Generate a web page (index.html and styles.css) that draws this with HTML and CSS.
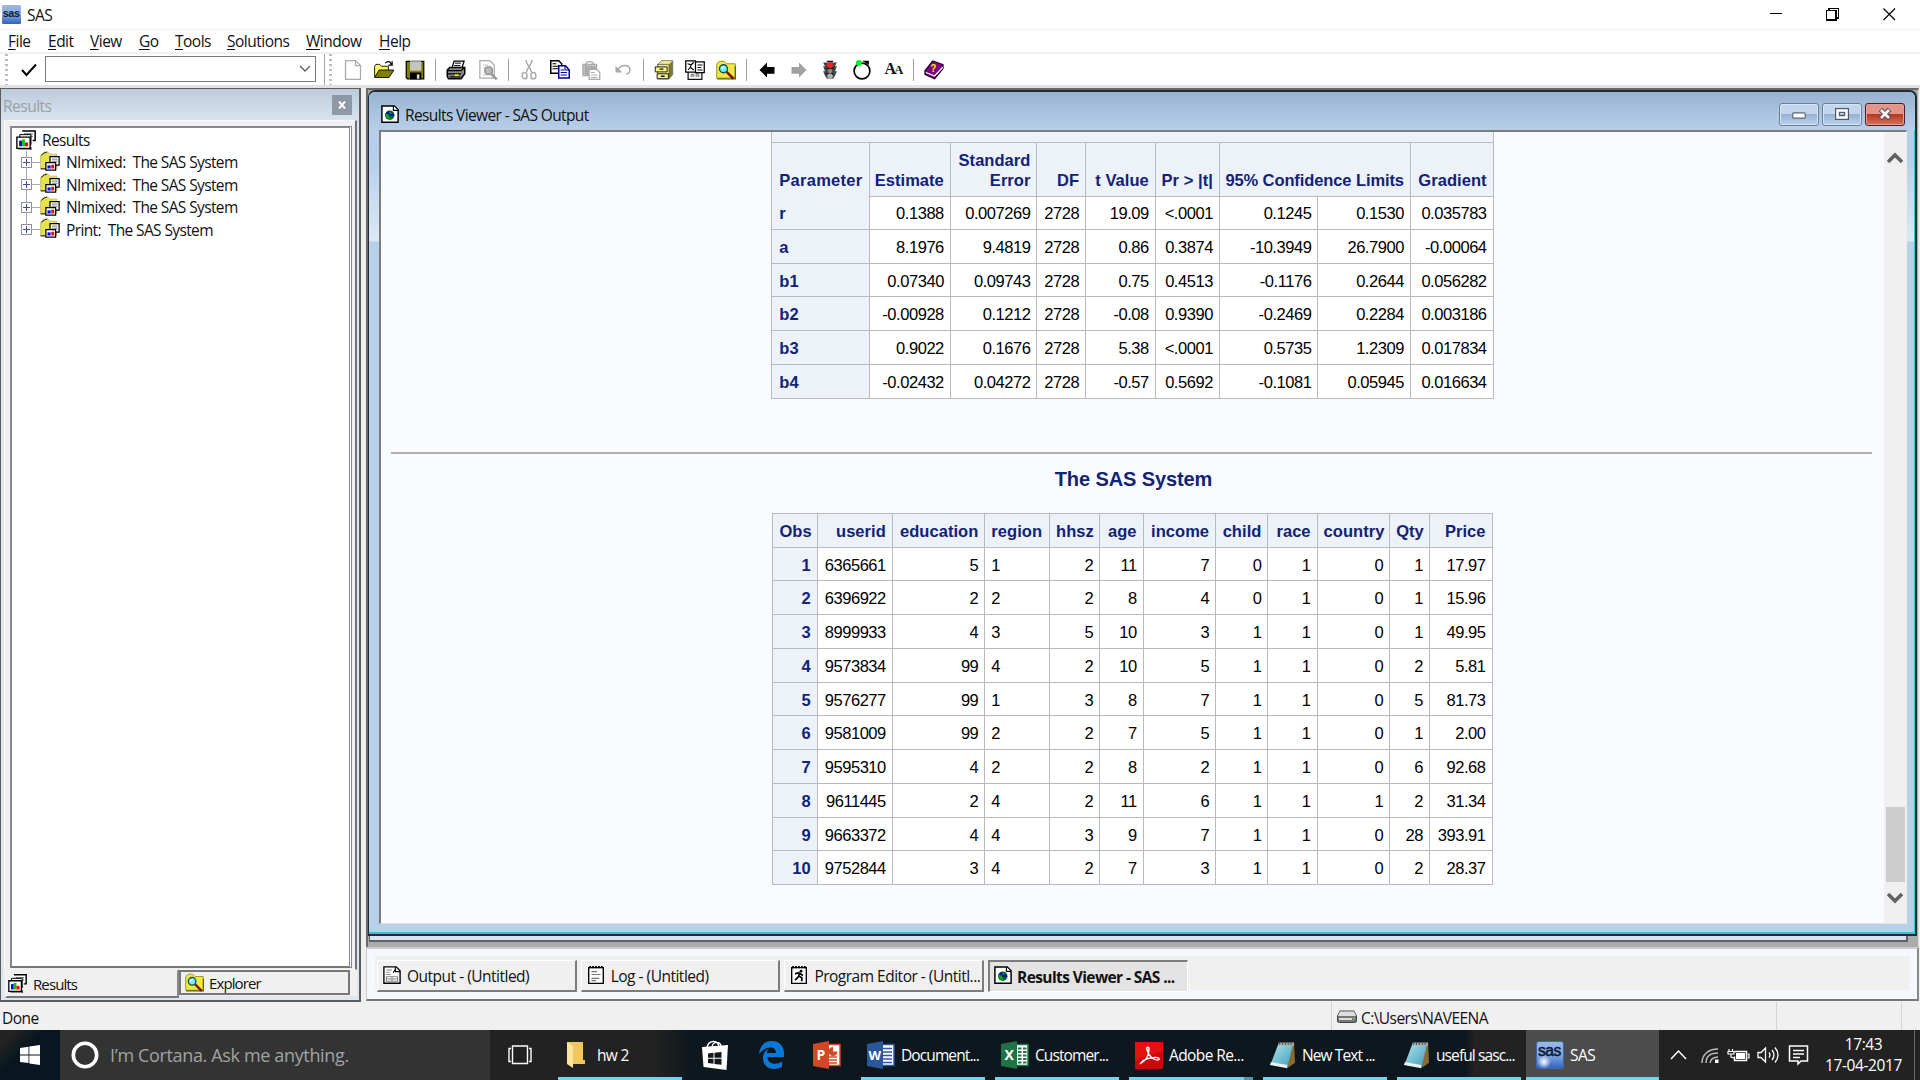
FILE: index.html
```html
<!DOCTYPE html>
<html lang="en">
<head>
<meta charset="utf-8">
<title>SAS</title>
<link rel="stylesheet" href="styles.css">
</head>
<body>
<svg class="defs" width="0" height="0">
  <defs>
    <linearGradient id="gSas" x1="0" y1="0" x2="0" y2="1"><stop offset="0" stop-color="#9db8e0"/><stop offset=".5" stop-color="#86a8e2"/><stop offset="1" stop-color="#2c62bd"/></linearGradient>
    <linearGradient id="gNote" x1="0" y1="0" x2="1" y2="1"><stop offset="0" stop-color="#b4e4ee"/><stop offset="1" stop-color="#3a9db8"/></linearGradient>
    <radialGradient id="gGlow"><stop offset="0" stop-color="#fff"/><stop offset="1" stop-color="#fff" stop-opacity="0"/></radialGradient>
    <symbol id="i-results" viewBox="0 0 16 16">
      <path d="M5 .7h10.300v7.600h-2" fill="#fff" stroke="#000" stroke-width="1.200"/><path d="M6.500 3h7M6.500 5h7" stroke="#777"/>
      <path d="M3 3.700h9v8H3z" fill="#fff" stroke="#000" stroke-width=".8"/><path d="M.7 5.700h10.600v9H.7z" fill="#fff" stroke="#000" stroke-width="1.100"/>
      <path d="M2.500 8.500h2.300V13H2.500z" fill="#00f"/><path d="M4.800 7.500h2.300V13H4.800z" fill="#0c0"/><path d="M7.100 10h2.600v3H7.100z" fill="#f00"/><path d="M12 13.500V16H2" fill="none" stroke="#000" stroke-width=".7"/>
    </symbol>
    <symbol id="i-rfolder" viewBox="0 0 16 16">
      <path d="M.5 3.500L3 1l3-.5 2 2h5.500V14H.5z" fill="#e6e34a" stroke="#b5b070" stroke-width=".6"/><path d="M.5 14.300h5" stroke="#333"/><path d="M1 3.500l2.500-2L5.500 1" fill="none" stroke="#222" stroke-width=".8"/>
      <path d="M8 4.500h7.300v6.800H8z" fill="#fff" stroke="#000"/><path d="M9.500 6.500h4.500M9.500 8.200h4.500" stroke="#777" stroke-width=".8"/>
      <path d="M4.700 9.200h7.800v6H4.700z" fill="#fff" stroke="#000"/><path d="M6 11.500h2.500v2.500H6z" fill="#00f"/><path d="M9 11h2.300v3H9z" fill="#f00"/>
    </symbol>
    <symbol id="i-globe" viewBox="0 0 16 16">
      <path d="M.8.8h11l3.400 3.500v11H.8z" fill="#fff" stroke="#000" stroke-width="1.300"/><path d="M11 .8v4h4.200" fill="#fff" stroke="#000"/>
      <circle cx="7.800" cy="9" r="4.200" fill="#063"/><path d="M8 5l4 4-4 1 1 3-4-1-1-4 2-2z" fill="#00b"/><path d="M4 7.500l3 1 1 2.500 1 2-3-.5-2-2.500zM8 5l2 3-3-.5z" fill="#0a0"/>
    </symbol>
    <symbol id="i-new" viewBox="0 0 16 16"><path d="M2 .5h8l4 4v11H2zM10 .5v4h4" fill="#fff" stroke="#aaa"/></symbol>
    <symbol id="i-open" viewBox="0 0 16 16"><path d="M.5 13.500V5l1-1.500h3L6 5h5.500v3" fill="#ff5" stroke="#000" stroke-width=".7"/><path d="M.5 14L4 8h12l-4 6z" fill="#808000" stroke="#000" stroke-width=".7"/><path d="M9 2.500c2-2 4-1.500 5 1M14.500 1v3h-3" fill="none" stroke="#000"/></symbol>
    <symbol id="i-save" viewBox="0 0 16 16"><path d="M1 1h14v14H2l-1-1z" fill="#808000" stroke="#000"/><path d="M4 1h9v7.500H4z" fill="#c4c4c4"/><path d="M4 10h9v5.500H4z" fill="#000"/><path d="M9.500 11.500h2V15h-2z" fill="#ddd"/></symbol>
    <symbol id="i-print" viewBox="0 0 16 16"><path d="M4.500 7L6.500.8h8L12.500 7z" fill="#fff" stroke="#000"/><path d="M7 2.500h5M6.500 4.500h5" stroke="#000" stroke-width=".8"/><path d="M1 8l2-2h12v5l-3 4H2l-1-2z" fill="#888" stroke="#000" stroke-width="1.200"/><path d="M1 8.500h11l3-2.500M1.500 11h10.500M3 13.500h8.500" stroke="#000" fill="none"/><path d="M7 12.200h3" stroke="#ee0" stroke-width="1.500"/></symbol>
    <symbol id="i-preview" viewBox="0 0 16 16"><path d="M1.500 14.500V.5h8L13 4v10.500z" fill="#fff" stroke="#aaa"/><path d="M4 4h4M4 6h2M4 12h3" stroke="#ccc"/><circle cx="8.500" cy="8.500" r="3" fill="#bbb" stroke="#999" stroke-width="1.500"/><path d="M10.500 11l4.500 4.500" stroke="#999" stroke-width="2"/></symbol>
    <symbol id="i-cut" viewBox="0 0 16 16"><g fill="none" stroke="#aaa" stroke-width="1.200"><path d="M5.500 0c0 4 4.500 6 4.500 10M10.500 0c0 4-4.500 6-4.500 10"/><ellipse cx="4.500" cy="12.500" rx="2" ry="2.500"/><ellipse cx="11.500" cy="12.500" rx="2" ry="2.500"/></g></symbol>
    <symbol id="i-copy" viewBox="0 0 16 16"><path d="M.6.6h6.400l2.400 2.400v7.500H.6z" fill="#fff" stroke="#000" stroke-width="1.200"/><path d="M2 3h3M2 5h5M2 7h5" stroke="#000" stroke-width=".8"/><path d="M7 4.600h5.400L15.400 8v6.400H7z" fill="#fff" stroke="#000090" stroke-width="1.200"/><path d="M12 4.600V8h3M8.500 8h3M8.500 10h5M8.500 12h5" fill="none" stroke="#000090" stroke-width=".8"/></symbol>
    <symbol id="i-paste" viewBox="0 0 16 16"><path d="M1 3h12v10H1z" fill="#aaa"/><path d="M4 3.500c0-3 6-3 6 0z" fill="#fff" stroke="#aaa"/><path d="M2.500 5v7M5 4.500h7" stroke="#ddd" stroke-dasharray="1 1"/><path d="M6.500 7.500h6l2.500 2.500v5.500H6.500z" fill="#fff" stroke="#aaa"/><path d="M8 10h3M8 12h5M8 14h5" stroke="#aaa" stroke-width=".8"/></symbol>
    <symbol id="i-undo" viewBox="0 0 16 16"><path d="M4 8C6 3.500 14 3 13.500 8c0 2-1.500 3-3 3.200" fill="none" stroke="#aaa" stroke-width="1.200"/><path d="M2 4.500V10h5.500z" fill="#aaa"/></symbol>
    <symbol id="i-drawer" viewBox="0 0 16 16"><path d="M3 3.500L6 .6h9v11L12 15H3z" fill="#7c7c10" stroke="#777" stroke-width=".8"/><path d="M3 3.500L6 .6h9L12 3.500z" fill="#f4f08a" stroke="#888" stroke-width=".5"/><path d="M3 3.500h9V15H3z" fill="#f4f08a" stroke="#555" stroke-width=".6"/><path d="M1 5.500h9.500v4H1zM2.500 11h9v4h-9z" fill="#f8f48a" stroke="#222" stroke-width=".8"/><path d="M4.500 7.300h3M5.500 13h3" stroke="#111" stroke-width="1.100"/></symbol>
    <symbol id="i-progs" viewBox="0 0 16 16"><path d="M2.500 7h11v8.500h-11z" fill="#fff" stroke="#111"/><path d="M5 13.500v-2h2v2M9 13.500v-3h2v3" stroke="#888" fill="#bbb"/><path d="M.6.6h7.800v9H.6zM8.400 1.500h7v8.500h-7z" fill="#fff" stroke="#000"/><path d="M2 3l3 .8 2-2M5 4L4 6 2.500 8M4.500 6L7 8M10 4h4M10 6h3M10 8h4" fill="none" stroke="#000" stroke-width=".9"/></symbol>
    <symbol id="i-search" viewBox="0 0 16 16"><path d="M.6 14.500V3L3 1h3.500l2 2h6.900v11.500z" fill="#eeea45" stroke="#99951a" stroke-width=".8"/><path d="M1 15h14.500V5" fill="none" stroke="#665f00"/><path d="M8.500 9.500l5.500 5.500" stroke="#801010" stroke-width="2"/><circle cx="6" cy="7" r="3.200" fill="#6ef0ff" stroke="#164c54" stroke-width="1.100"/><path d="M4.500 7l2-2" stroke="#fff"/></symbol>
    <symbol id="i-back" viewBox="0 0 16 16"><path d="M2 8l6-6v3.500h6v5.500H8V14z" fill="#000"/></symbol>
    <symbol id="i-fwd" viewBox="0 0 16 16"><path d="M14 8L8 2v3.500H2V11h6v3z" fill="#a0a0a0"/></symbol>
    <symbol id="i-stop" viewBox="0 0 16 16"><path d="M2.500 2h11l-1.500 3h1.500L12 9h1.500L12 12.500 10.500 15h-5L4 12.500 2.500 9H4L2.500 5H4z" fill="#444"/><path d="M5.500 1h5M5 6.500h6M5 11h6" stroke="#111"/><circle cx="8" cy="4" r="2.400" fill="#ff2020"/><circle cx="8" cy="8.800" r="1.800" fill="#888"/><circle cx="8" cy="12.900" r="2.200" fill="#b0b0b0"/></symbol>
    <symbol id="i-loop" viewBox="0 0 16 16"><circle cx="8" cy="8.800" r="6.300" fill="#fff" stroke="#000" stroke-width="1.300"/><path d="M8 .5h5.500V4z" fill="#000"/><circle cx="5.500" cy="2.300" r="2.300" fill="#0e2"/></symbol>
    <symbol id="i-book" viewBox="0 0 16 16"><path d="M.8 8.500L7 .8l8.200 3v3L8.500 15 .8 11.500z" fill="#800080" stroke="#200020"/><path d="M1.500 10l7 2.800 6.500-7" fill="none" stroke="#fff"/><text x="5" y="9.500" font-family="Liberation Sans" font-size="8" font-weight="bold" fill="#fe0">?</text></symbol>
    <symbol id="i-out" viewBox="0 0 16 16"><path d="M.8.8h11l3.400 3.500v11H.8z" fill="#fff" stroke="#000" stroke-width="1.200"/><path d="M11 1v4h4M9 6l2-3" fill="none" stroke="#000"/><path d="M3 3.500h5M3 5.500h3M3 7.500h4" stroke="#888"/><path d="M3 9.500h10v4H3zM8 9.500v4M3 11.500h10" fill="none" stroke="#888"/></symbol>
    <symbol id="i-log" viewBox="0 0 16 16"><path d="M1.500 1.500h13v14h-13z" fill="#fff" stroke="#000" stroke-width="1.200"/><path d="M2 1h13" stroke="#000" stroke-width="2" stroke-dasharray="1.600 1"/><path d="M4 5h5M4 7.500h8M4 11h7M4 13h4" stroke="#777"/></symbol>
    <symbol id="i-prog" viewBox="0 0 16 16"><path d="M1.500 1.500h13v14h-13z" fill="#fff" stroke="#000" stroke-width="1.200"/><path d="M2 1h13" stroke="#000" stroke-width="2" stroke-dasharray="1.600 1"/><circle cx="9.800" cy="4.700" r="1.300"/><path d="M4.500 7l3-1 4 2.500M8.500 6L7.500 9.500l-3 3M8 9l2.500 1.500v3" fill="none" stroke="#000" stroke-width="1.500"/></symbol>
    <symbol id="i-sas" viewBox="0 0 28 28"><rect x=".5" y=".5" width="27" height="27" rx="2.500" fill="url(#gSas)" stroke="#3c68b4"/><circle cx="8" cy="21" r="7" fill="url(#gGlow)"/><text x="2" y="15" textLength="23" lengthAdjust="spacingAndGlyphs" font-family="Liberation Sans" font-size="16" fill="#0c1a30" stroke="#0c1a30" stroke-width=".5">sas</text></symbol>
    <symbol id="i-note" viewBox="0 0 28 36" preserveAspectRatio="none"><path d="M12 3h14l1 25-7 6z" fill="#8a6a35"/><path d="M10 3l15 1-6 30-17-5z" fill="url(#gNote)"/><path d="M2 27l17 4v4L1 31z" fill="#e8f4f6"/><path d="M10 2h16v4l-16-1z" fill="#a9a9a9"/><path d="M11 2v3m3-3v3m3-3v3m3-3v3m3-3v3" stroke="#444"/></symbol>
  </defs>
</svg>

<header class="titlebar">
  <svg class="app-icon" width="19" height="19" viewBox="0 0 28 28"><rect width="28" height="28" rx="2" fill="url(#gSas)"/><text x="1" y="17" textLength="25" lengthAdjust="spacingAndGlyphs" font-family="Liberation Sans" font-size="16" font-weight="bold" fill="#0c1a30">sas</text></svg>
  <span class="app-name">SAS</span>
  <svg class="sys" width="132" height="14" viewBox="0 0 132 14" fill="none" stroke="#000" stroke-width="1.200" shape-rendering="crispEdges"><path d="M5 6.500h12"/><path d="M61.500 3.500h9.500v9.500h-9.500zM64 3V1.500h9.500v9.500H71"/><path d="M118.500 1.500l11.500 11.500M130 1.500l-11.500 11.500" shape-rendering="auto"/></svg>
</header>

<nav class="menubar">
  <span style="width:40px"><u>F</u>ile</span><span style="width:42px"><u>E</u>dit</span><span style="width:49px"><u>V</u>iew</span><span style="width:36px"><u>G</u>o</span><span style="width:52px"><u>T</u>ools</span><span style="width:79px"><u>S</u>olutions</span><span style="width:73px"><u>W</u>indow</span><span><u>H</u>elp</span>
</nav>

<div class="toolbar">
  <i class="grip"></i>
  <svg class="check" width="16" height="14" viewBox="0 0 16 14"><path d="M1 7l4.500 5L15 1.500" fill="none" stroke="#000" stroke-width="2"/></svg>
  <div class="combo"><svg width="12" height="8" viewBox="0 0 12 8"><path d="M1 1l5 5 5-5" fill="none" stroke="#666" stroke-width="1.500"/></svg></div>
  <i class="edge"></i><i class="grip"></i>
  <div class="tools">
    <b><svg><use href="#i-new"/></svg></b><b><svg><use href="#i-open"/></svg></b><b><svg><use href="#i-save"/></svg></b><i class="sep"></i>
    <b><svg><use href="#i-print"/></svg></b><b><svg><use href="#i-preview"/></svg></b><i class="sep"></i>
    <b><svg><use href="#i-cut"/></svg></b><b><svg><use href="#i-copy"/></svg></b><b><svg><use href="#i-paste"/></svg></b><b><svg><use href="#i-undo"/></svg></b><i class="sep"></i>
    <b><svg><use href="#i-drawer"/></svg></b><b><svg><use href="#i-progs"/></svg></b><b><svg><use href="#i-search"/></svg></b><i class="sep"></i>
    <b><svg><use href="#i-back"/></svg></b><b><svg><use href="#i-fwd"/></svg></b><b><svg><use href="#i-stop"/></svg></b><b><svg><use href="#i-loop"/></svg></b><b class="font-icon">A<small>A</small></b><i class="sep"></i>
    <b><svg><use href="#i-book"/></svg></b>
  </div>
</div>

<main class="work">
  <aside class="pane">
    <div class="pane-title"><span>Results</span><span class="pane-x"><svg width="8" height="8" viewBox="0 0 8 8"><path d="M1 .5l6 7M7 .5l-6 7" stroke="#fff" stroke-width="2"/></svg></span></div>
    <div class="pane-body">
      <div class="tree">
        <div class="root"><svg><use href="#i-results"/></svg>Results</div>
        <div class="node"><i class="plus"></i><svg><use href="#i-rfolder"/></svg>NImixed:&nbsp; The SAS System</div>
        <div class="node"><i class="plus"></i><svg><use href="#i-rfolder"/></svg>NImixed:&nbsp; The SAS System</div>
        <div class="node"><i class="plus"></i><svg><use href="#i-rfolder"/></svg>NImixed:&nbsp; The SAS System</div>
        <div class="node last"><i class="plus"></i><svg><use href="#i-rfolder"/></svg>Print:&nbsp; The SAS System</div>
      </div>
    </div>
    <div class="pane-tabs">
      <div class="ptab on"><svg><use href="#i-results"/></svg>Results</div>
      <div class="ptab"><svg><use href="#i-search"/></svg>Explorer</div>
    </div>
  </aside>

  <section class="desk">
    <div class="mdi">
      <div class="win">
        <div class="win-title">
          <svg class="wicon"><use href="#i-globe"/></svg><span class="wname">Results Viewer - SAS Output</span>
          <span class="wbtn"><svg class="low" width="14" height="7"><rect x=".8" y=".8" width="12.400" height="5.400" rx="1" fill="#fff" stroke="#566575" stroke-width="1.200"/></svg></span>
          <span class="wbtn"><svg width="14" height="12"><rect x="2.500" y="2.500" width="9" height="7" fill="none" stroke="#4b5a6b" stroke-width="5"/><rect x="2.500" y="2.500" width="9" height="7" fill="none" stroke="#fff" stroke-width="2.600"/></svg></span>
          <span class="wbtn close"><svg width="14" height="12"><path d="M2.500 1.500l9 9M11.500 1.500l-9 9" stroke="#5b4a55" stroke-width="5"/><path d="M3 2l8 8M11 2l-8 8" stroke="#f4f4f4" stroke-width="2.800"/></svg></span>
        </div>
        <div class="view">
          <div class="page">
            <table class="grid params">
              <tbody>
                <tr class="strip"><th></th></tr>
                <tr class="head"><th class="l">Parameter</th><th>Estimate</th><th>Standard<br>Error</th><th>DF</th><th>t Value</th><th>Pr &gt; |t|</th><th class="wide">95% Confidence Limits</th><th>Gradient</th></tr>
                <tr><th class="l">r</th><td>0.1388</td><td>0.007269</td><td>2728</td><td>19.09</td><td>&lt;.0001</td><td>0.1245</td><td>0.1530</td><td>0.035783</td></tr>
                <tr><th class="l">a</th><td>8.1976</td><td>9.4819</td><td>2728</td><td>0.86</td><td>0.3874</td><td>-10.3949</td><td>26.7900</td><td>-0.00064</td></tr>
                <tr><th class="l">b1</th><td>0.07340</td><td>0.09743</td><td>2728</td><td>0.75</td><td>0.4513</td><td>-0.1176</td><td>0.2644</td><td>0.056282</td></tr>
                <tr><th class="l">b2</th><td>-0.00928</td><td>0.1212</td><td>2728</td><td>-0.08</td><td>0.9390</td><td>-0.2469</td><td>0.2284</td><td>0.003186</td></tr>
                <tr><th class="l">b3</th><td>0.9022</td><td>0.1676</td><td>2728</td><td>5.38</td><td>&lt;.0001</td><td>0.5735</td><td>1.2309</td><td>0.017834</td></tr>
                <tr><th class="l">b4</th><td>-0.02432</td><td>0.04272</td><td>2728</td><td>-0.57</td><td>0.5692</td><td>-0.1081</td><td>0.05945</td><td>0.016634</td></tr>
              </tbody>
            </table>
            <hr>
            <h1>The SAS System</h1>
            <table class="grid obs">
              <tbody>
                <tr><th>Obs</th><th>userid</th><th>education</th><th class="l">region</th><th>hhsz</th><th>age</th><th>income</th><th>child</th><th>race</th><th>country</th><th>Qty</th><th>Price</th></tr>
                <tr><th>1</th><td>6365661</td><td>5</td><td class="l">1</td><td>2</td><td>11</td><td>7</td><td>0</td><td>1</td><td>0</td><td>1</td><td>17.97</td></tr>
                <tr><th>2</th><td>6396922</td><td>2</td><td class="l">2</td><td>2</td><td>8</td><td>4</td><td>0</td><td>1</td><td>0</td><td>1</td><td>15.96</td></tr>
                <tr><th>3</th><td>8999933</td><td>4</td><td class="l">3</td><td>5</td><td>10</td><td>3</td><td>1</td><td>1</td><td>0</td><td>1</td><td>49.95</td></tr>
                <tr><th>4</th><td>9573834</td><td>99</td><td class="l">4</td><td>2</td><td>10</td><td>5</td><td>1</td><td>1</td><td>0</td><td>2</td><td>5.81</td></tr>
                <tr><th>5</th><td>9576277</td><td>99</td><td class="l">1</td><td>3</td><td>8</td><td>7</td><td>1</td><td>1</td><td>0</td><td>5</td><td>81.73</td></tr>
                <tr><th>6</th><td>9581009</td><td>99</td><td class="l">2</td><td>2</td><td>7</td><td>5</td><td>1</td><td>1</td><td>0</td><td>1</td><td>2.00</td></tr>
                <tr><th>7</th><td>9595310</td><td>4</td><td class="l">2</td><td>2</td><td>8</td><td>2</td><td>1</td><td>1</td><td>0</td><td>6</td><td>92.68</td></tr>
                <tr><th>8</th><td>9611445</td><td>2</td><td class="l">4</td><td>2</td><td>11</td><td>6</td><td>1</td><td>1</td><td>1</td><td>2</td><td>31.34</td></tr>
                <tr><th>9</th><td>9663372</td><td>4</td><td class="l">4</td><td>3</td><td>9</td><td>7</td><td>1</td><td>1</td><td>0</td><td>28</td><td>393.91</td></tr>
                <tr><th>10</th><td>9752844</td><td>3</td><td class="l">4</td><td>2</td><td>7</td><td>3</td><td>1</td><td>1</td><td>0</td><td>2</td><td>28.37</td></tr>
              </tbody>
            </table>
          </div>
          <div class="scroll">
            <svg width="16" height="12" viewBox="0 0 16 12"><path d="M1 10l7-7 7 7" fill="none" stroke="#606060" stroke-width="3.600"/></svg>
            <div class="thumb"></div>
            <svg width="16" height="12" viewBox="0 0 16 12"><path d="M1 2l7 7 7-7" fill="none" stroke="#606060" stroke-width="3.600"/></svg>
          </div>
        </div>
      </div>
      <div class="back-win"></div>
    </div>
    <div class="winbar">
      <div class="wtab"><svg><use href="#i-out"/></svg><span>Output - (Untitled)</span></div>
      <div class="wtab"><svg><use href="#i-log"/></svg><span>Log - (Untitled)</span></div>
      <div class="wtab"><svg><use href="#i-prog"/></svg><span>Program Editor - (Untitl...</span></div>
      <div class="wtab on"><svg><use href="#i-globe"/></svg><span>Results Viewer - SAS ...</span></div>
    </div>
  </section>
</main>

<footer class="status">
  <div class="st-msg">Done</div>
  <div class="st-dir"><svg width="20" height="13" viewBox="0 0 20 13"><path d="M3 1h14l2.500 5v5q0 1.500-2 1.500h-15Q.5 12.500.5 11V6z" fill="#777" stroke="#444"/><path d="M3 1.500h14l2 4.500H1z" fill="#ddd"/><path d="M2 9h13" stroke="#ddd" stroke-width="2"/><path d="M16 8.500h2" stroke="#4d4" stroke-width="1.500"/></svg>C:\Users\NAVEENA</div>
  <div class="st-a"></div><div class="st-b"></div>
</footer>

<div class="taskbar">
  <div class="start"><svg width="20" height="20" viewBox="0 0 20 20" fill="#fff"><path d="M0 3l8.500-1.200v7.700H0zM9.300 1.600L20 0v9.500H9.300zM0 10.400h8.500v7.700L0 17zM9.300 10.400H20V20L9.300 18.400z"/></svg></div>
  <div class="search"><svg width="28" height="28" viewBox="0 0 28 28"><circle cx="14" cy="14" r="11.700" fill="none" stroke="#fff" stroke-width="3.600"/></svg>I’m Cortana. Ask me anything.</div>
  <div class="ic tview"><svg width="24" height="20" viewBox="0 0 24 20" fill="none" stroke="#fff" stroke-width="1.400"><path d="M4.500 1h15v17.500h-15zM3 3.500H1v13h2M21 3.500h2v13h-2"/></svg></div>
  <div class="task hw"><svg width="18" height="26" viewBox="0 0 18 26"><path d="M0 0h16v18h2v4H5z" fill="#f0c75e"/><path d="M0 0l6 4v22l-6-4z" fill="#ffe49b"/></svg><span>hw 2</span></div>
  <div class="ic"><svg width="26" height="30" viewBox="0 0 26 30"><path d="M5 8C6 0 16-1 17 7M10 7C11 1 18 1 19 6" fill="none" stroke="#fff" stroke-width="1.400"/><path d="M0 7l26-2-1.500 25L1.500 27z" fill="#fff"/><path d="M6 13.500l5.500-.7v5H6zM12.500 12.700l7-.7v5.800h-7zM6 18.800h5.500v5L6 23zM12.500 18.800h7v6l-7-.8z" fill="#14181b"/></svg></div>
  <div class="ic"><svg width="25" height="28" viewBox="0 0 25 28"><path d="M0 13C1 4 6 0 13 0c8 0 12 6 12 12.500V16H8.500c.3 8 9.500 8 14.500 4.500V26c-8 4-19 2-19-9 0-4.500 2.500-8 6-9.500-1.500 1.600-2 3-2 4.500H17c0-8-11-7-17 1z" fill="#0a78d7"/></svg></div>
  <div class="ic"><svg width="28" height="28" viewBox="0 0 28 28"><path d="M14 3.500h13v21H14z" fill="#fff" stroke="#d24726" stroke-width="1.500"/><path d="M16 16h8M16 19h8M16 22h8" stroke="#d24726" stroke-width="1.500"/><path d="M20 6a4.500 4.500 0 1 0 4.500 4.500H20z" fill="#d24726"/><path d="M0 3l16-3v28L0 25z" fill="#d24726"/><text x="3.500" y="19" font-family="Open Sans" font-weight="bold" font-size="14" fill="#fff">P</text></svg></div>
  <div class="task word"><svg width="28" height="28" viewBox="0 0 28 28"><path d="M14 3.500h13v21H14z" fill="#fff" stroke="#2b579a" stroke-width="1.500"/><path d="M16 7.500h9M16 11h9M16 14.500h9M16 18h9M16 21.500h9" stroke="#2b579a" stroke-width="1.500"/><path d="M0 3l16-3v28L0 25z" fill="#2b579a"/><text x="1.500" y="19" font-family="Open Sans" font-weight="bold" font-size="13" fill="#fff">W</text></svg><span>Document...</span></div>
  <div class="task"><svg width="28" height="28" viewBox="0 0 28 28"><path d="M14 3.500h13v21H14z" fill="#fff" stroke="#217346" stroke-width="1.500"/><path d="M17 7.500h3.500M22 7.500h3.500M17 11h3.500M22 11h3.500M17 14.500h3.500M22 14.500h3.500M17 18h3.500M22 18h3.500M17 21.500h3.500M22 21.500h3.500" stroke="#217346" stroke-width="2"/><path d="M0 3l16-3v28L0 25z" fill="#217346"/><text x="3.500" y="19" font-family="Open Sans" font-weight="bold" font-size="14" fill="#fff">X</text></svg><span>Customer...</span></div>
  <div class="task stack"><svg width="28" height="27" viewBox="0 0 28 27"><path d="M0 0h28v27H0z" fill="#c80a0a"/><path d="M0 0h28v9L0 18z" fill="#e31111"/><path d="M6 21c5-2 8-8 8-14 0-3-3-2-2 1 2 6 6 10 11 10 3-1 0-3-4-2.500C13 16 8 18 6 21z" fill="none" stroke="#fff" stroke-width="1.400"/></svg><span>Adobe Re...</span></div>
  <div class="task"><svg width="27" height="28"><use href="#i-note"/></svg><span>New Text ...</span></div>
  <div class="task note2"><svg width="27" height="28"><use href="#i-note"/></svg><span>useful sasc...</span></div>
  <div class="task active"><svg width="28" height="28"><use href="#i-sas"/></svg><span>SAS</span></div>
  <svg class="tray" width="140" height="24" viewBox="0 0 140 24" fill="none" stroke="#fff" stroke-width="1.500">
    <path d="M1 16l7.500-8 7.500 8"/>
    <path d="M32 20c0-8 6-14 16-14M36 20c0-6 4-10 12-10M40 20c0-3 3-6 8-6" stroke="#bbb"/><path d="M45 16.500h3.500V20H45z" fill="#fff" stroke="none"/>
    <path d="M64.500 8.500h12v9h-12v-4"/><path d="M66 10h9v6h-9z" fill="#fff" stroke="none"/><path d="M77.500 11h1.500v4h-1.500M59 6v2M62.500 6v2M58 8.500h6v2.500h-6zM61 11v3l3 1" stroke-width="1.200"/>
    <path d="M88 9.500h3l4.500-4.500v14l-4.500-4.500h-3zM99 9.500q2 2.500 0 5M102 7q4 5 0 10M105 4.500q6 7.500 0 15" stroke-width="1.300"/>
    <path d="M119.500 3h18v15H131l-3 3v-3h-8.500zM123 7.500h11M123 11h11M123 14.500h7"/>
  </svg>
  <div class="clock">17:43<br>17-04-2017</div>
  <i class="peek"></i>
</div>
</body>
</html>
```
FILE: styles.css
```css
* { box-sizing: border-box; }
body { margin: 0; width: 1920px; height: 1080px; overflow: hidden; display: flex; flex-direction: column; background: #f0f0f0; color: #111; font: 15.5px/20px "Open Sans", "Noto Sans", sans-serif; letter-spacing: -0.5px; }
.defs { position: absolute; }
svg { display: block; flex: none; }

.titlebar { height: 30px; flex: none; background: #fff; border-bottom: 1px solid #f0f0f0; display: flex; align-items: center; padding: 0 23px 0 2px; }
.app-name { margin-left: 6px; flex: 1; }
.sys { margin-top: -2px; }
.menubar { height: 24px; flex: none; background: #fff; border-bottom: 2px solid #f0f0f0; display: flex; padding: 1px 0 0 8px; }
.menubar span { display: block; }
.menubar u { text-underline-offset: 2px; text-decoration-thickness: 1px; }

.toolbar { height: 34px; flex: none; background: #fff; border-bottom: 3px solid #e2e2e2; display: flex; align-items: center; padding-left: 5px; }
.grip { width: 3px; height: 31px; background: repeating-linear-gradient(#bbb 0 2px, #fff 2px 5px); }
.check { margin-left: 13px; }
.combo { margin: 0 0 1px 8px; width: 271px; height: 26px; border: 1px solid #7a7a7a; display: flex; align-items: center; justify-content: flex-end; padding-right: 4px; }
.edge { width: 1px; height: 31px; background: #a5a5a5; margin: 0 4px 0 8px; }
.tools { display: flex; align-items: center; margin-left: 5px; }
.tools b { width: 31.4px; display: flex; justify-content: center; align-items: center; }
.tools svg { width: 20px; height: 20px; }
.sep { width: 9.5px; height: 22px; background: linear-gradient(#a0a0a0, #a0a0a0) center / 1px 100% no-repeat; }
.tools .font-icon { font: bold 16px/20px "Liberation Serif", serif; letter-spacing: -1.8px; align-items: baseline; color: #111; }
.font-icon small { font-size: 12.5px; }

.work { height: 914px; flex: none; display: flex; gap: 5px; }
.pane { width: 361px; border: 1px solid #5c5c5c; border-width: 1px 2px 2px 1px; background: #dde6f1; display: flex; flex-direction: column; }
.pane-title { height: 31px; display: flex; justify-content: space-between; align-items: center; padding: 3px 7px 0 2px; color: #9aa0a6; background: linear-gradient(#bccbdc, #d7e3f1); }
.pane-x { width: 20px; height: 20px; background: #8e99a5; display: flex; align-items: center; justify-content: center; margin-top: -3px; }
.pane-body { height: 850px; width: 353px; margin-left: 3px; background: #f0f0f0; border: 1px solid #f8f8f8; border-right: 2px solid #6d7480; padding: 5px 3px 2px 5px; }
.tree { height: 842px; background: #fff; border: 2px solid #84898f; border-right: 3px double #84898f; border-bottom-color: #777; padding: 0 0 0 4px; letter-spacing: -0.62px; }
.tree svg { width: 20px; height: 20px; }
.root { display: flex; align-items: center; height: 23px; gap: 6px; }
.node { display: flex; align-items: center; height: 22.500px; padding-left: 5px; background: linear-gradient(90deg, transparent 10px, #aaa 10px, #aaa 11px, transparent 11px), linear-gradient(#aaa, #aaa) 16px 50% / 8px 1px no-repeat; }
.node.last { background-size: 100% 50%, 8px 1px; background-repeat: no-repeat; }
.node svg { margin: -3px 6px 0 8px; }
.plus { width: 11px; height: 11px; border: 1px solid #919191; background: linear-gradient(#3c4f9c, #3c4f9c) center / 7px 1px no-repeat, linear-gradient(#3c4f9c, #3c4f9c) center / 1px 7px no-repeat, #fff; }
.pane-tabs { display: flex; height: 30px; padding-left: 4px; background: linear-gradient(#f0f0f0, #f0f0f0) 3px 0 / 353px 26px no-repeat; font: 15px/18px "Open Sans", sans-serif; letter-spacing: -0.9px; }
.ptab { width: 171px; height: 25px; display: flex; align-items: center; gap: 5px; padding-left: 4px; border: 1px solid #777; border-width: 2px 2px 2px 2px; }
.ptab.on { width: 174px; height: 29px; margin-top: -1px; border-color: transparent #888 #777 transparent; background: #f0f0f0; padding-left: 1px; gap: 6px; }
.ptab svg { width: 19px; height: 19px; }

.desk { width: 1553px; display: flex; flex-direction: column; }
.mdi { height: 859px; background: #ababab; border: 2px solid #6b6b6b; border-bottom: 0; border-right: 1px solid #ddd; }
.win { width: 1549px; height: 846px; border: 1px solid #222b30; border-top-width: 1px; border-width: 2px 2px 2px 1px; border-radius: 7px 7px 0 0; box-shadow: inset -1px -2px 0 #35c3d6; padding: 0 8px 10px 10px; background: linear-gradient(#98b4d2 0, #b8cfe9 38px, #b4cdea 60px, #dce8f5 149px, #b9d0e9 150px); }
.win-title { height: 38px; display: flex; align-items: center; margin: 0 -8px 0 -10px; padding: 6px 10px 0 12px; background: linear-gradient(#98b4d2, #b8cfe9); border-radius: 6px 6px 0 0; }
.wicon { width: 18px; height: 18px; }
.wname { flex: 1; margin: 1px 0 0 6px; letter-spacing: -0.62px; }
.wbtn { width: 40px; height: 23px; margin-left: 3px; border: 1px solid #6c7f98; border-radius: 3px; display: flex; align-items: center; justify-content: center; box-shadow: inset 0 0 0 1px #d6e4f3; background: linear-gradient(#c2d5ec 48%, #97b3d2 50%, #b9d1ea); }
.wbtn .low { margin-top: 3px; }
.wbtn.close { border-color: #57192b; box-shadow: inset 0 0 0 1px #e2a090; background: linear-gradient(#e2968a 48%, #b9371f 50%, #d3745a); }
.view { height: 794px; display: flex; border: 2px solid #7d7d7d; border-right: 1px solid #eee; border-bottom: 1px solid #e3e3e3; background: #fafbfe; }
.page { width: 1505px; overflow: hidden; font: 16.500px/20px "Liberation Sans", Arial, sans-serif; letter-spacing: -0.45px; }
.scroll { width: 22px; background: #f0f0f0; display: flex; flex-direction: column; align-items: center; padding-top: 20px; }
.thumb { width: 19px; height: 75px; background: #cdcdcd; margin: 643px 0 10px; }
.back-win { width: 1539px; height: 6px; margin-left: 1px; background: #dae5f3; border: 1px solid #5f6266; border-width: 0 2px 2px 1px; }

.grid { display: block; width: max-content; margin: 0 auto; border-left: 1px solid #b7bbc0; background: #fff; border-spacing: 0; color: #000; }
.grid tbody { display: block; }
.grid tr { display: grid; height: 33.770px; }
.grid th, .grid td { padding: 7px 6px 0; text-align: right; border-right: 1px solid #b7bbc0; border-bottom: 1px solid #b7bbc0; white-space: nowrap; }
.grid th { background: #edf2f9; color: #112277; font-weight: bold; letter-spacing: 0.05px; }
.grid .l { text-align: left; }
.params tr { grid-template-columns: 97.500px 81px 86.600px 48.700px 69.700px 64.100px 98.500px 92.500px 82.700px; }
.params .strip { height: 10.500px; grid-template-columns: 721.300px; }
.params .strip th { padding: 0; }
.params .head { height: 53.700px; }
.params .head th { display: flex; align-items: flex-end; justify-content: flex-end; padding-bottom: 6px; }
.params .head .l { justify-content: flex-start; letter-spacing: 0.25px; }
.params th.l { padding-left: 7px; }
.params .head .wide { grid-column: span 2; letter-spacing: -0.1px; }
.obs { border-top: 1px solid #b7bbc0; }
.obs tr { grid-template-columns: 44.200px 75.200px 92.500px 64.700px 50.300px 43.300px 72.500px 52.300px 49.200px 72.600px 39.800px 62.600px; }
.page hr { height: 2px; margin: 53px 12px 0 10px; border: 0; background: #b0b0b2; }
.page h1 { margin: 14px 0 23px; text-align: center; font-size: 20px; line-height: 22px; color: #112277; letter-spacing: -0.1px; padding-left: 2px; }

.winbar { height: 54px; border: 1px solid #ccc; border-width: 2px 2px 2px 1px; border-right-color: #888; border-bottom-color: #777; background: linear-gradient(#f0f0f0, #f0f0f0) 8px 7px / 1535px 34px no-repeat, #f4f7fc; display: flex; gap: 4px; padding: 11px 0 0 10px; }
.wtab { width: 199.700px; height: 32px; display: flex; align-items: center; gap: 6px; padding: 1px 0 0 5px; border: 1px solid #fff; border-right: 2px solid #7d7d7d; border-bottom: 2px solid #7d7d7d; background: #f0f0f0; white-space: nowrap; }
.wtab svg { width: 18px; height: 18px; margin-top: -3px; }
.wtab.on { border: 1px solid #7d7d7d; border-top-width: 2px; border-left-width: 2px; border-right-color: #fff; border-bottom-color: #fff; background: #e3e3e3; font-weight: bold; letter-spacing: -0.6px; gap: 5px; padding: 0 0 0 4px; }

.status { height: 28px; flex: none; display: flex; }
.status div { padding: 6px 0 0 2px; }
.status .st-msg { width: 1332px; border-right: 1px solid #d7d7d7; }
.status .st-dir { width: 445px; border-right: 1px solid #d7d7d7; display: flex; gap: 4px; padding-left: 5px; letter-spacing: -0.55px; }
.st-dir svg { margin-top: 2px; }
.status .st-a { width: 125px; border-right: 1px solid #d7d7d7; }

.taskbar { height: 50px; flex: none; display: flex; color: #fff; background: linear-gradient(90deg, #222 0 655px, #0d171d 690px 1465px, #222 1475px); }
.start { width: 60px; display: flex; align-items: center; justify-content: center; background: linear-gradient(135deg, #222 15%, #08161f 40%); }
.search { width: 430px; background: #333; display: flex; align-items: center; gap: 11px; padding-left: 11px; color: #a2a2a2; font-size: 18px; letter-spacing: -0.35px; }
.ic { width: 56px; display: flex; align-items: center; justify-content: center; }
.tview { width: 60px; }
.task { width: 124px; margin-right: 10px; padding: 3px 0 0 6px; display: flex; align-items: center; gap: 6px; border-bottom: 3px solid #76d0f2; white-space: nowrap; letter-spacing: -0.9px; }
.task.hw { margin: 0 5px 0 8px; padding-left: 9px; gap: 12px; letter-spacing: -0.7px; }
.task.word { margin-left: 6px; }
.task.stack { border-image: linear-gradient(90deg, #76d0f2 112px, #5594ab 112px) 3; letter-spacing: -0.6px; }
.note2 { margin-right: 5px; }
.task.active { width: 133px; margin-right: 11px; padding-left: 10px; background: #4c4c4c; letter-spacing: -0.5px; }
.tray { margin-top: 13px; }
.clock { width: 107px; padding-top: 4px; text-align: center; line-height: 21px; letter-spacing: -0.4px; }
.peek { width: 1px; margin-left: -3px; background: #666; }
```
